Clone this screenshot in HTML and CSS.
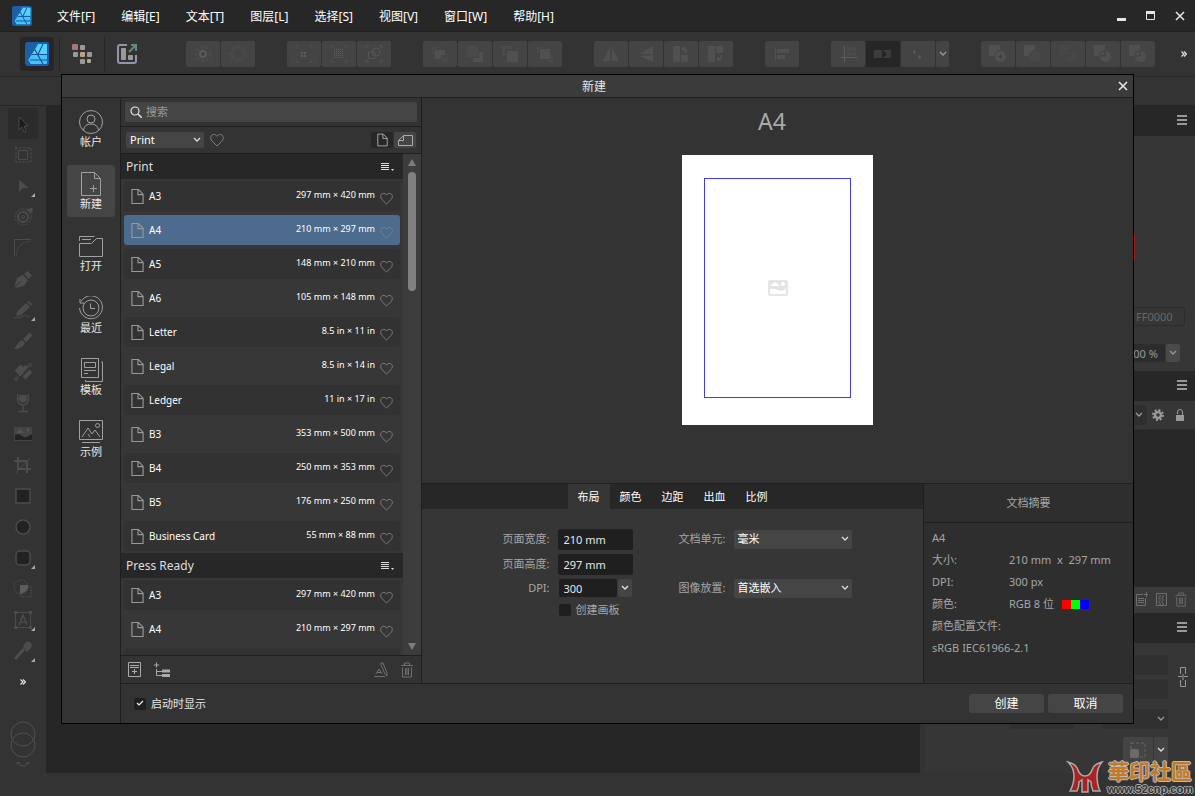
FILE: index.html
```html
<!DOCTYPE html>
<html lang="zh-CN">

<head>
    <meta charset="UTF-8">
    <meta name="viewport" content="width=device-width, initial-scale=1.0">
    <title>新建</title>
    <link rel="stylesheet" href="styles.css">
</head>

<body>
    <!-- shared icons -->
    <svg class="sprite" aria-hidden="true">
        <symbol id="logo" viewBox="0 0 24 24">
            <rect width="24" height="24" rx="3" fill="#1c5fa8" />
            <path d="M12 2h9q1 0 1 1v18q0 1-1 1H5l-3-4z" fill="#45c4fa" />
            <path d="M12 2h9q1 0 1 1v9H7z" fill="#56d0ff" />
            <path d="M12.500 2 2.500 18 5 22M9.500 7l8.500 15M7 12.500h15M5 18h17M13 12.500 18 2" fill="none" stroke="#17549a" stroke-width="1.200" />
        </symbol>
        <symbol id="doc" viewBox="0 0 14 17">
            <path d="M1 1h7l5 5v10H1zM7.500 1v5.500H13" fill="none" stroke="currentColor" stroke-width="1.200" />
        </symbol>
        <symbol id="heart" viewBox="0 0 14 14">
            <path d="M7 13 2.300 8.300C.5 6.500.3 4 1.400 2.600 3 .8 5.800 1 7 3.400 8.200 1 11 .8 12.600 2.600c1.100 1.400.9 3.900-.9 5.700z" fill="none" stroke="currentColor" />
        </symbol>
        <symbol id="burger" viewBox="0 0 10 10">
            <path d="M0 1h10M0 5h10M0 9h10" stroke="currentColor" stroke-width="2" />
        </symbol>
        <symbol id="listmenu" viewBox="0 0 13 10">
            <path d="M0 1.500h8M0 3.500h8M0 5.500h8M0 7.500h8" stroke="currentColor" stroke-width="1.200" />
            <path d="M10 7h3l-1.500 2z" fill="currentColor" />
        </symbol>
        <symbol id="close" viewBox="0 0 10 10">
            <path d="M1 1l8 8M9 1 1 9" stroke="currentColor" stroke-width="1.600" />
        </symbol>
        <symbol id="chev" viewBox="0 0 8 6">
            <path d="M1 1l3 3 3-3" fill="none" stroke="currentColor" stroke-width="1.300" />
        </symbol>
        <symbol id="more" viewBox="0 0 6 6">
            <path d="M.5.5 3 3 .5 5.500M3 .5 5.500 3 3 5.500" fill="none" stroke="currentColor" stroke-width="1.200" />
        </symbol>
        <symbol id="trash" viewBox="0 0 12 16">
            <path d="M0 3.500h12M3.500 3V1h5v2M1.500 5.500v9.500h9V5.500M4.500 6v7M6 6v7M7.500 6v7" fill="none" stroke="currentColor" />
        </symbol>
        <symbol id="bool" viewBox="0 0 20 20">
            <path d="M1 1h11v5a6 6 0 0 0-6 6H1z" fill="currentColor" />
            <circle cx="12.500" cy="12.500" r="5.500" fill="currentColor" />
        </symbol>
    </svg>

    <div class="app">
        <header class="menubar">
            <svg class="app-logo"><use href="#logo" /></svg>
            <nav class="menus">
                <button>文件[F]</button>
                <button>编辑[E]</button>
                <button>文本[T]</button>
                <button>图层[L]</button>
                <button>选择[S]</button>
                <button>视图[V]</button>
                <button>窗口[W]</button>
                <button>帮助[H]</button>
            </nav>
            <div class="window-buttons">
                <button aria-label="最小化"><svg width="10" height="10"><path d="M0 8.500h9" stroke="currentColor" stroke-width="3" /></svg></button>
                <button aria-label="最大化"><svg width="10" height="10"><path d="M.5 1v7.500h8V1" fill="none" stroke="currentColor" /><path d="M0 1.500h9" stroke="currentColor" stroke-width="3" /></svg></button>
                <button aria-label="关闭"><svg width="10" height="10"><use href="#close" /></svg></button>
            </div>
        </header>

        <div class="toolbar">
            <div class="personas">
                <button class="persona active" aria-label="Designer"><svg width="24" height="24"><use href="#logo" /></svg></button>
                <button class="persona" aria-label="Pixel">
                    <svg width="20" height="20">
                        <rect width="6" height="6" rx="1" fill="#a87579" />
                        <rect x="8" y="1" width="5" height="5" rx="1" fill="#999" />
                        <rect x="1" y="8" width="5" height="5" rx="1" fill="#999" />
                        <rect x="8" y="8" width="5" height="5" rx="1" fill="#bba085" />
                        <rect x="15" y="8" width="5" height="5" rx="1" fill="#999" />
                        <rect x="8" y="15" width="5" height="5" rx="1" fill="#999" />
                        <rect x="15" y="15" width="4" height="4" rx="1" fill="#b3a880" />
                    </svg>
                </button>
                <button class="persona" aria-label="Export">
                    <svg width="20" height="20">
                        <path d="M10 1H3Q1 1 1 3v14q0 2 2 2h14q2 0 2-2v-6" fill="none" stroke="#9494ac" stroke-width="2" />
                        <rect x="4" y="4" width="5" height="12" rx="1" fill="#999" />
                        <rect x="11" y="11" width="5" height="5" rx="1" fill="#999" />
                        <path d="M12 8l7-7M14 1h5v6" fill="none" stroke="#5e8d7c" stroke-width="2" />
                    </svg>
                </button>
            </div>
            <div class="tool-groups">
                <div class="group">
                    <button aria-label="设置"><svg width="20" height="20"><circle cx="10" cy="10" r="7" fill="none" stroke="currentColor" stroke-width="3" stroke-dasharray="3 2" opacity=".6" /><circle cx="10" cy="10" r="3" fill="none" stroke="#5c5c5c" stroke-width="2" /></svg></button>
                    <button aria-label="默认"><svg width="20" height="20"><circle cx="10" cy="10" r="6" fill="none" stroke="#4a4a4a" stroke-width="2" /><circle cx="10" cy="10" r="8" fill="none" stroke="#4a4a4a" stroke-width="2" stroke-dasharray="3 3" /></svg></button>
                </div>
                <div class="group">
                    <button aria-label="像素网格"><svg width="20" height="20"><path d="M2 5V2h3M15 2h3v3M18 15v3h-3M5 18H2v-3" fill="none" stroke="currentColor" /><path d="M7 9h6M7 12h6" stroke="#5c5c5c" stroke-width="2" stroke-dasharray="2 1" /></svg></button>
                    <button aria-label="网格"><svg width="20" height="20"><path d="M2 5V2h3M15 2h3v3M18 15v3h-3M5 18H2v-3" fill="none" stroke="currentColor" /><path d="M5 5.500h10M5 7.500h10M5 9.500h10M5 11.500h10M5 13.500h10" stroke="#606060" stroke-dasharray="1 1" /></svg></button>
                    <button aria-label="形状对齐"><svg width="20" height="20" fill="none" stroke="#555"><path d="M2 5V2h3M15 2h3v3M18 15v3h-3M5 18H2v-3M4.500 8h6.500v6.500H4.500z" /><circle cx="12" cy="8" r="4" /></svg></button>
                </div>
                <div class="group">
                    <button aria-label="置于底层"><svg width="20" height="20" fill="currentColor"><path d="M2 3h6v2H5v5H2z" opacity=".4" /><path d="M5 6h10v5h-4v4H5z" /><path d="M12 13h6v5h-6z" opacity=".4" /></svg></button>
                    <button aria-label="后移"><svg width="20" height="20"><path d="M2 2h11v11H2z" fill="#4a4a4a" /><path d="M14 8h4v10H8v-4h6z" fill="currentColor" /></svg></button>
                    <button aria-label="前移"><svg width="20" height="20"><path d="M2 2h10v3H5v7H2z" fill="#4a4a4a" /><path d="M7 7h11v11H7z" fill="currentColor" /></svg></button>
                    <button aria-label="置于顶层"><svg width="20" height="20"><path d="M2 3h6v1H4v5H2zM16 12h2v6h-6v-2h4z" fill="#4a4a4a" /><path d="M5 5h10v10H5z" fill="currentColor" /></svg></button>
                </div>
                <div class="group">
                    <button aria-label="水平翻转"><svg width="20" height="20" fill="currentColor"><path d="M9 3v14H2zM11 3v14h7z" /></svg></button>
                    <button aria-label="垂直翻转"><svg width="20" height="20" fill="currentColor"><path d="M17 2v8H3zM17 11v7L3 12z" /></svg></button>
                    <button aria-label="左旋"><svg width="20" height="20"><path d="M2 2h7v16H2zM10 11h7v7h-7z" fill="currentColor" /><path d="M15 9V5h-4M13 3l-2 2 2 2" fill="none" stroke="#5a5a5a" /></svg></button>
                    <button aria-label="右旋"><svg width="20" height="20"><path d="M2 2h7v16H2zM10 2h7v7h-7z" fill="currentColor" /><path d="M15 11v4h-4M13 13l-2 2 2 2" fill="none" stroke="#5a5a5a" /></svg></button>
                </div>
                <div class="group">
                    <button aria-label="对齐"><svg width="20" height="20"><path d="M3.500 3v14" stroke="currentColor" /><path d="M5 7h12M5 13h8" stroke="currentColor" stroke-width="4" /></svg></button>
                </div>
                <div class="group">
                    <button aria-label="吸附网格"><svg width="20" height="20"><path d="M6.500 2v16M3 13.500h16" stroke="#5c5c5c" /><path d="M9 3h4v4H9zM14 3h4v4h-4zM9 8h4v4H9zM14 8h4v4h-4z" fill="#4a4a4a" /></svg></button>
                    <button class="pressed" aria-label="吸附"><svg width="20" height="20" fill="#3b3b3b"><path d="M1 6h8v8H1zM10 6h8v8h-8l4-4z" /></svg></button>
                    <button aria-label="吸附候选"><svg width="20" height="20" fill="#585858"><path d="M5 7l2-1 1 2-1 2-2-1zM10 12l2-1 1 2-1 2-2-1z" /></svg></button>
                    <button class="narrow" aria-label="吸附选项"><svg width="8" height="6"><use href="#chev" /></svg></button>
                </div>
                <div class="group">
                    <button aria-label="相加"><svg width="20" height="20"><use href="#bool" /><path d="M12.500 10v5M10 12.500h5" stroke="#3d3d3d" /></svg></button>
                    <button aria-label="相减"><svg width="20" height="20"><use href="#bool" /><circle cx="12.500" cy="12.500" r="5.500" fill="#484848" /></svg></button>
                    <button aria-label="相交"><svg class="faint" width="20" height="20"><use href="#bool" /><path d="M7 12h5V7" fill="none" stroke="#333" /></svg></button>
                    <button aria-label="分割"><svg width="20" height="20"><use href="#bool" /><path d="M7 12h5V7" fill="none" stroke="#3d3d3d" /></svg></button>
                    <button aria-label="合并"><svg width="20" height="20"><use href="#bool" /><path d="M7 12h5V7" fill="none" stroke="#3d3d3d" /></svg></button>
                </div>
            </div>
            <button class="more" aria-label="更多"><svg width="6" height="6"><use href="#more" /></svg></button>
        </div>
        <div class="contextbar"></div>

        <div class="workspace">
            <aside class="tools">
                <button class="active" aria-label="移动"><svg width="20" height="20"><path d="M6 3v13l3-3 2 5 2-1-2-5h4z" fill="#1c1c1c" stroke="#555" stroke-width=".7" /></svg></button>
                <button aria-label="画板"><svg width="20" height="20" fill="none" stroke="currentColor"><path d="M5.500 5.500h9v9h-9z" /><path d="M2 3h16v14H3V1" stroke-dasharray="3 1" /></svg></button>
                <button class="sub" aria-label="节点"><svg width="20" height="20"><path d="M6 4v12l4-4h6z" fill="currentColor" /></svg></button>
                <button aria-label="点变换"><svg width="20" height="20" fill="none" stroke="currentColor"><circle cx="10" cy="10" r="8" stroke-dasharray="3 1" /><circle cx="10" cy="10" r="5" stroke-width="2" /><circle cx="10" cy="10" r="1.500" /><path d="M14 3l5-2v5z" fill="currentColor" /></svg></button>
                <button aria-label="边角"><svg width="20" height="20" fill="none" stroke="currentColor"><path d="M1.500 18V1.500H18" /><path d="M3 18Q4 4 18 3" opacity=".7" /></svg></button>
                <button aria-label="钢笔"><svg width="20" height="20"><path d="M1 19 4 9l6-3 5 5-4 6zM11 5l3-3 5 4-3 4z" fill="currentColor" /><path d="M1 19l7-7" stroke="#333" /></svg></button>
                <button class="sub" aria-label="铅笔"><svg width="20" height="20"><path d="M4 12 13 3l4 4-9 8-5 1zM14 2l2-1 3 3-1 2z" fill="currentColor" /><path d="M1 18q7 0 9-2t3 0 4 0" fill="none" stroke="currentColor" /></svg></button>
                <button aria-label="矢量画笔"><svg width="20" height="20"><path d="M10 8l6-6q3 0 3 3l-6 6zM9 9l3 3q-3 6-11 6l5-7z" fill="currentColor" /></svg></button>
                <button aria-label="填充"><svg width="20" height="20" stroke="currentColor"><path d="M3 10l6-6M6 13l8-9M11 16l7-7" stroke-width="4" /><path d="M3 17 17 3" /><circle cx="3" cy="17" r="1.500" fill="#333" /><circle cx="17" cy="3" r="1.500" fill="#333" /></svg></button>
                <button aria-label="透明度"><svg width="20" height="20" fill="none" stroke="currentColor" stroke-width="1.500"><path d="M5 1Q3 11 10 12q7-1 5-11M10 12v6M5 18.500h10" /><path d="M7 2v5q3 4 6 0V2" fill="currentColor" /></svg></button>
                <button aria-label="置入图像"><svg width="20" height="20"><path d="M1 3h18v14H1z" fill="#444" /><path d="M2 11q4-2 7 1t10-2v6H2z" fill="#222" /><path d="M3 9l4-4 4 4z" fill="#555" /><circle cx="15" cy="6" r="1.500" fill="#555" /></svg></button>
                <button aria-label="裁剪"><svg width="20" height="20" fill="none" stroke="currentColor" stroke-width="2"><path d="M5 2v12h13M1 6h13v12" /><path d="M3 18 17 3" stroke-width="1" /></svg></button>
                <button aria-label="矩形"><svg width="20" height="20"><rect x="3" y="3" width="14" height="14" fill="#222" stroke="currentColor" stroke-width="1.500" /></svg></button>
                <button aria-label="椭圆"><svg width="20" height="20"><circle cx="10" cy="10" r="7" fill="#222" stroke="currentColor" stroke-width="1.500" /></svg></button>
                <button class="sub" aria-label="圆角矩形"><svg width="20" height="20"><rect x="3" y="3" width="14" height="14" rx="4" fill="#222" stroke="currentColor" stroke-width="1.500" /></svg></button>
                <button aria-label="形状构建"><svg width="20" height="20"><circle cx="8" cy="8" r="7" fill="none" stroke="currentColor" stroke-dasharray="2 1" /><path d="M8 8h10v10H8z" fill="none" stroke="currentColor" stroke-dasharray="2 1" /><path d="M7 6h8q0 8-8 9z" fill="#5c5c5c" /></svg></button>
                <button class="sub" aria-label="文本"><svg width="20" height="20" fill="none" stroke="currentColor"><path d="M2.500 2.500h15v15h-15z" /><path d="M1 2.500h3M16 2.500h3M1 17.500h3M16 17.500h3" stroke-width="3" /><path d="M6 15l4-10 4 10M7.500 12h5" stroke-width="1.500" /></svg></button>
                <button class="sub" aria-label="取色"><svg width="20" height="20"><path d="M2 18 11 8" stroke="currentColor" stroke-width="3" /><path d="M10 6l4 5 4-4q2-4-1-6t-5 1z" fill="currentColor" /></svg></button>
                <button class="tools-more" aria-label="更多工具"><svg width="6" height="6"><use href="#more" /></svg></button>
                <svg class="swatches" width="28" height="50" fill="none" stroke="#515151"><circle cx="14" cy="15" r="12" /><circle cx="14" cy="26" r="12" /><path d="M9 43q1 4 5 4t5-4M7 45l2-2 2 2M17 45l2-2 2 2" /></svg>
            </aside>

            <main class="canvas"></main>

            <aside class="panels">
                <div class="panel-head"><svg><use href="#burger" /></svg></div>
                <section class="colour-panel">
                    <span class="wheel"></span>
                    <input class="hex" type="text" value="FF0000" aria-label="十六进制">
                    <div class="opacity">
                        <input type="text" value="100 %" aria-label="不透明度">
                        <button aria-label="不透明度滑块"><svg width="8" height="6"><use href="#chev" /></svg></button>
                    </div>
                </section>
                <div class="panel-head"><svg><use href="#burger" /></svg></div>
                <div class="layer-bar">
                    <button class="blend" aria-label="混合模式"><svg width="8" height="6"><use href="#chev" /></svg></button>
                    <svg width="12" height="12"><circle cx="6" cy="6" r="3" fill="none" stroke="currentColor" stroke-width="2.500" /><circle cx="6" cy="6" r="5" fill="none" stroke="currentColor" stroke-width="2" stroke-dasharray="2 1.900" /></svg>
                    <svg width="10" height="12"><path d="M1 6h8v6H1z" fill="currentColor" /><path d="M2.500 5V3q0-2.500 2.500-2.500T7.500 3v3" fill="none" stroke="currentColor" /></svg>
                </div>
                <div class="layer-list"></div>
                <div class="layer-actions">
                    <svg width="12" height="15" fill="none" stroke="currentColor"><path d="M7 2.500H.5v11h9V6M2 6.500h6M2 8.500h6M2 10.500h6M10.500 0v5M8 2.500h4" /></svg>
                    <svg width="11" height="15" fill="none" stroke="currentColor"><path d="M.5 1.500h10v12H.5z" /><path d="M3 4h6M2 6h6M3 8h6M2 10h6M3 12h6" stroke-dasharray="2 1" /></svg>
                    <svg width="12" height="15"><use href="#trash" /></svg>
                </div>
                <div class="panel-head"><svg><use href="#burger" /></svg></div>
                <section class="transform-panel">
                    <div class="transform-fields">
                        <input type="text" aria-label="X"><input type="text" aria-label="宽">
                        <input type="text" aria-label="Y"><input type="text" aria-label="高">
                        <input type="text" aria-label="旋转">
                        <button class="shear" aria-label="切变"><svg width="8" height="6"><use href="#chev" /></svg></button>
                    </div>
                    <svg class="link" width="10" height="22" fill="none" stroke="currentColor"><path d="M2.500 8V1.500h5V8M2.500 14v6.500h5V14M0 10.500h4M6 10.500h4M5 8v6" /></svg>
                    <div class="scale">
                        <button aria-label="缩放"><svg width="16" height="16"><path d="M1 1h14v14H1z" fill="none" stroke="#666" stroke-dasharray="3 2" /><rect y="7" width="9" height="9" rx="2" fill="#6a6a6a" /></svg></button>
                        <button class="narrow" aria-label="缩放选项"><svg width="8" height="6"><use href="#chev" /></svg></button>
                    </div>
                </section>
            </aside>
        </div>
        <footer class="statusbar"></footer>
    </div>

    <div class="dialog" role="dialog" aria-labelledby="dialogTitle">
        <div class="dialog-title">
            <span id="dialogTitle">新建</span>
            <button aria-label="关闭"><svg width="10" height="10"><use href="#close" /></svg></button>
        </div>
        <div class="dialog-body">
            <nav class="side-nav">
                <button>
                    <svg width="24" height="24"><circle cx="12" cy="12" r="11.500" /><circle cx="12" cy="9" r="4" /><path d="M4.500 20q1-6 7.500-6t7.500 6" /></svg>
                    帐户
                </button>
                <button class="active">
                    <svg width="24" height="24"><path d="M2.500.5h13l6 6v17h-19zM15.500.5v6h6M14.500 13v7M11 16.500h7" /></svg>
                    新建
                </button>
                <button>
                    <svg width="24" height="24"><path d="M.5 22.500V9.500h12l5-5h6v18zM.5 7V2.500h15M3 5.500h9" /></svg>
                    打开
                </button>
                <button>
                    <svg width="24" height="24"><path d="M2 5.500A11.500 11.500 0 1 1 .5 12M1 3v4h4" /><circle cx="12" cy="12" r="8" /><path d="M11.500 7.500v5H16" /></svg>
                    最近
                </button>
                <button>
                    <svg width="24" height="24"><path d="M2.500.5h17v19h-17zM22 4h1.500v19.500h-17V22M5.500 4.500h11v5h-11zM5 12.500h12M5 15.500h4" /></svg>
                    模板
                </button>
                <button>
                    <svg width="24" height="24"><path d="M.5.5h23v19H.5zM3 17l6-9 4 6 3-4 5 7M9 14l2 3M3 22.500h18" /><circle cx="18.500" cy="5.500" r="2" /></svg>
                    示例
                </button>
            </nav>

            <div class="dialog-main">
                <div class="columns">
                    <section class="presets">
                        <div class="search">
                            <svg width="12" height="12"><circle cx="5" cy="5" r="4" fill="none" stroke="currentColor" stroke-width="1.200" /><path d="M8 8l4 4" stroke="currentColor" stroke-width="1.500" /></svg>
                            <input type="text" placeholder="搜索" aria-label="搜索">
                        </div>
                        <div class="filter">
                            <select aria-label="类别"><option>Print</option></select>
                            <button class="fav" aria-label="收藏"><svg width="14" height="14"><use href="#heart" /></svg></button>
                            <div class="orientation">
                                <button class="active" aria-label="纵向"><svg width="11" height="14"><use href="#doc" /></svg></button>
                                <button aria-label="横向"><svg width="15" height="11" fill="none" stroke="currentColor"><path d="M5.500.5h9v10H.5V5.500zM5.500.5v5H.5" /></svg></button>
                            </div>
                        </div>
                        <div class="list-wrap">
                            <div class="list">
                                <h2>Print <svg width="13" height="10"><use href="#listmenu" /></svg></h2>
                                <ul>
                                    <li><svg class="page"><use href="#doc" /></svg><b>A3</b><span>297 mm × 420 mm</span><button aria-label="收藏"><svg width="13" height="13"><use href="#heart" /></svg></button></li>
                                    <li class="selected"><svg class="page"><use href="#doc" /></svg><b>A4</b><span>210 mm × 297 mm</span><button aria-label="收藏"><svg width="13" height="13"><use href="#heart" /></svg></button></li>
                                    <li><svg class="page"><use href="#doc" /></svg><b>A5</b><span>148 mm × 210 mm</span><button aria-label="收藏"><svg width="13" height="13"><use href="#heart" /></svg></button></li>
                                    <li><svg class="page"><use href="#doc" /></svg><b>A6</b><span>105 mm × 148 mm</span><button aria-label="收藏"><svg width="13" height="13"><use href="#heart" /></svg></button></li>
                                    <li><svg class="page"><use href="#doc" /></svg><b>Letter</b><span>8.5 in × 11 in</span><button aria-label="收藏"><svg width="13" height="13"><use href="#heart" /></svg></button></li>
                                    <li><svg class="page"><use href="#doc" /></svg><b>Legal</b><span>8.5 in × 14 in</span><button aria-label="收藏"><svg width="13" height="13"><use href="#heart" /></svg></button></li>
                                    <li><svg class="page"><use href="#doc" /></svg><b>Ledger</b><span>11 in × 17 in</span><button aria-label="收藏"><svg width="13" height="13"><use href="#heart" /></svg></button></li>
                                    <li><svg class="page"><use href="#doc" /></svg><b>B3</b><span>353 mm × 500 mm</span><button aria-label="收藏"><svg width="13" height="13"><use href="#heart" /></svg></button></li>
                                    <li><svg class="page"><use href="#doc" /></svg><b>B4</b><span>250 mm × 353 mm</span><button aria-label="收藏"><svg width="13" height="13"><use href="#heart" /></svg></button></li>
                                    <li><svg class="page"><use href="#doc" /></svg><b>B5</b><span>176 mm × 250 mm</span><button aria-label="收藏"><svg width="13" height="13"><use href="#heart" /></svg></button></li>
                                    <li><svg class="page"><use href="#doc" /></svg><b>Business Card</b><span>55 mm × 88 mm</span><button aria-label="收藏"><svg width="13" height="13"><use href="#heart" /></svg></button></li>
                                </ul>
                                <h2>Press Ready <svg width="13" height="10"><use href="#listmenu" /></svg></h2>
                                <ul>
                                    <li><svg class="page"><use href="#doc" /></svg><b>A3</b><span>297 mm × 420 mm</span><button aria-label="收藏"><svg width="13" height="13"><use href="#heart" /></svg></button></li>
                                    <li><svg class="page"><use href="#doc" /></svg><b>A4</b><span>210 mm × 297 mm</span><button aria-label="收藏"><svg width="13" height="13"><use href="#heart" /></svg></button></li>
                                    <li></li>
                                </ul>
                            </div>
                            <div class="scrollbar">
                                <svg width="8" height="7"><path d="M4 0l4 7H0z" fill="#7d7d7d" /></svg>
                                <span class="thumb"></span>
                                <svg width="8" height="7"><path d="M0 0h8L4 7z" fill="#7d7d7d" /></svg>
                            </div>
                        </div>
                        <div class="list-actions">
                            <button aria-label="添加预设"><svg width="13" height="16" fill="none" stroke="currentColor"><path d="M.5.5h12v14H.5zM2 3.500h9M2 5.500h9M6.500 7v5M4 9.500h5" /></svg></button>
                            <button aria-label="添加类别"><svg width="16" height="16" fill="none" stroke="currentColor"><path d="M0 3h5M2.500.5v5M2.500 7v6.500H8M2.500 9.500H8" /><path d="M8 9h8M8 13.500h8" stroke-width="3" /></svg></button>
                            <span class="spacer"></span>
                            <button class="off" aria-label="重命名"><svg width="14" height="16" fill="none" stroke="currentColor"><path d="M0 14.500h11M2 12l3-5 3 5M3 10.500h4M7 1l2 0 4 10v3l-2-2L7 3z" /></svg></button>
                            <button class="off" aria-label="删除"><svg width="12" height="16"><use href="#trash" /></svg></button>
                        </div>
                    </section>

                    <section class="details">
                        <div class="preview">
                            <h1>A4</h1>
                            <div class="sheet">
                                <div class="margins">
                                    <svg width="20" height="16"><rect x="1" y="1" width="18" height="14" rx="1" fill="#fff" stroke="#e6e6e6" stroke-width="2" /><path d="M1 1h18v7q-5 4-9 2t-9-1z" fill="#e3e3e3" /><path d="M2 6l5-4 5 4z" fill="#fff" /><circle cx="15" cy="4" r="2" fill="#fff" /></svg>
                                </div>
                            </div>
                        </div>
                        <div class="settings">
                            <div class="options">
                                <div class="tabs" role="tablist">
                                    <button class="active" role="tab">布局</button>
                                    <button role="tab">颜色</button>
                                    <button role="tab">边距</button>
                                    <button role="tab">出血</button>
                                    <button role="tab">比例</button>
                                </div>
                                <form class="layout-form">
                                    <label for="pageWidth">页面宽度:</label>
                                    <input type="text" id="pageWidth" value="210 mm">
                                    <label for="unit">文档单元:</label>
                                    <select id="unit"><option>毫米</option></select>

                                    <label for="pageHeight">页面高度:</label>
                                    <input type="text" id="pageHeight" value="297 mm">

                                    <label for="dpi" class="row-start">DPI:</label>
                                    <div class="combo">
                                        <input type="text" id="dpi" value="300">
                                        <button type="button" aria-label="DPI 列表"><svg width="8" height="6"><use href="#chev" /></svg></button>
                                    </div>
                                    <label for="placement">图像放置:</label>
                                    <select id="placement"><option>首选嵌入</option></select>

                                    <label class="check artboard"><input type="checkbox">创建画板</label>
                                </form>
                            </div>
                            <div class="summary">
                                <h3>文档摘要</h3>
                                <dl>
                                    <dt class="wide">A4</dt>
                                    <dt>大小:</dt>
                                    <dd>210 mm &nbsp;x&nbsp; 297 mm</dd>
                                    <dt>DPI:</dt>
                                    <dd>300 px</dd>
                                    <dt>颜色:</dt>
                                    <dd>RGB 8 位 <span class="rgb"><i class="r"></i><i class="g"></i><i class="b"></i></span></dd>
                                    <dt class="wide">颜色配置文件:</dt>
                                    <dd class="wide">sRGB IEC61966-2.1</dd>
                                </dl>
                            </div>
                        </div>
                    </section>
                </div>

                <div class="dialog-footer">
                    <label class="check"><input type="checkbox" checked>启动时显示</label>
                    <div class="buttons">
                        <button>创建</button>
                        <button>取消</button>
                    </div>
                </div>
            </div>
        </div>
    </div>

    <div class="watermark">
        <svg width="38" height="34" viewBox="0 0 38 34">
            <path d="M2 2q8 2 10 8t7 6q5 0 7-6t10-8q-5 6-5 14 0 9 3 15h-7q-2-5-2-9l-3-2v12h-6V20l-3 2q0 5-2 9H4q4-7 4-15T2 2z" fill="#a82322" stroke="#aaa" stroke-width="1.500" />
        </svg>
        <div class="watermark-text">
            <strong>華印社區</strong>
            <small>www.52cnp.com</small>
        </div>
    </div>
</body>

</html>
```

FILE: styles.css
```css
:root {
    --bg: #333333;
    --panel: #363636;
    --dark: #272727;
    --field: #1f1f1f;
    --button: #454545;
    --line: #1f1f1f;
    --accent: #4d6b8c;
    --text: #e6e6e6;
    --muted: #a6a6a6;
}

* {
    box-sizing: border-box;
}

body {
    margin: 0;
    background: var(--bg);
    color: var(--text);
    font-family: "Noto Sans", "Noto Sans CJK SC", sans-serif;
    font-size: 11px;
    line-height: 16px;
}

button,
input,
select {
    margin: 0;
    padding: 0;
    border: none;
    border-radius: 2px;
    background: none;
    color: inherit;
    font: inherit;
}

button {
    display: flex;
    align-items: center;
    justify-content: center;
}

select {
    appearance: none;
    padding: 0 16px 0 4px;
    background: var(--button) url("data:image/svg+xml,%3Csvg xmlns='http://www.w3.org/2000/svg' width='8' height='6'%3E%3Cpath d='M1 1l3 3 3-3' fill='none' stroke='%23ddd' stroke-width='1.3'/%3E%3C/svg%3E") no-repeat right 3px center;
    color: #fff;
}

svg {
    display: block;
    flex: none;
}

.sprite {
    display: none;
}

/* application window */

.app {
    display: flex;
    flex-direction: column;
    height: 100vh;
    overflow: hidden;
}

.menubar {
    display: flex;
    align-items: center;
    height: 32px;
    padding: 0 10px 0 12px;
    background: var(--dark);
    border-bottom: 1px solid var(--line);
}

.app-logo {
    width: 20px;
    height: 20px;
}

.menus {
    display: flex;
    gap: 26px;
    margin-left: 25px;
    padding-top: 2px;
    font-size: 12px;
    color: #fff;
}

.window-buttons {
    display: flex;
    gap: 19px;
    margin-left: auto;
}

.toolbar {
    display: flex;
    align-items: center;
    height: 45px;
    padding: 0 8px 0 20px;
    border-bottom: 1px solid var(--dark);
}

.personas {
    display: flex;
    flex: none;
    width: 166px;
}

.persona {
    width: 45px;
    height: 34px;
}

.persona + .persona {
    border-left: 1px solid #262626;
    border-radius: 0;
}

.persona.active {
    width: 34px;
    margin-right: 5px;
    background: #262626;
    border-radius: 3px;
}

.tool-groups {
    display: flex;
    gap: 32px;
    color: #505050;
}

.group {
    display: flex;
    gap: 1px;
}

.group button {
    width: 34px;
    height: 26px;
    background: #444;
}

.group .pressed {
    background: #262626;
}

.group .narrow {
    width: 13px;
    color: #999;
}

.faint {
    opacity: 0.3;
}

.more {
    margin-left: auto;
}

.contextbar {
    height: 29px;
    border-bottom: 1px solid var(--dark);
}

.workspace {
    display: flex;
    flex: 1;
    min-height: 0;
}

.tools {
    display: flex;
    flex-direction: column;
    align-items: center;
    width: 46px;
    padding-top: 2px;
    color: #4c4c4c;
}

.tools button {
    position: relative;
    flex: none;
    width: 30px;
    height: 31px;
}

.tools .active {
    background: #2b2b2b;
    border-radius: 3px;
}

.tools .sub::after {
    content: "";
    position: absolute;
    right: 3px;
    bottom: 4px;
    border: 2px solid transparent;
    border-right-color: #aaa;
    border-bottom-color: #aaa;
}

.tools .tools-more {
    color: var(--text);
}

.swatches {
    margin-top: 22px;
}

.canvas {
    flex: 1;
    background: #262626;
}

.panels {
    display: flex;
    flex-direction: column;
    width: 275px;
    border-left: 5px solid var(--bg);
    background: var(--panel);
    color: #999;
}

.panel-head {
    display: flex;
    align-items: center;
    justify-content: flex-end;
    height: 30px;
    padding: 0 8px 2px 0;
    background: var(--dark);
}

.panel-head svg {
    width: 10px;
    height: 10px;
}

.colour-panel {
    display: flex;
    flex-direction: column;
    align-items: flex-end;
    height: 235px;
    padding: 98px 10px 0 0;
}

.wheel {
    align-self: stretch;
    width: 210px;
    height: 26px;
    border-right: 2px solid #a81616;
}

.hex {
    width: 52px;
    height: 19px;
    margin: 47px 0 18px;
    padding-left: 2px;
    border: 1px solid #2c2c2c;
    color: #666;
}

.opacity {
    display: flex;
    gap: 1px;
    margin-right: 5px;
}

.opacity input {
    width: 48px;
    height: 18px;
    padding-left: 10px;
    background: #2c2c2c;
}

.opacity button {
    width: 14px;
    background: #4a4a4a;
}

.layer-bar {
    display: flex;
    align-items: center;
    justify-content: flex-end;
    gap: 11px;
    height: 29px;
    padding-right: 10px;
    border-bottom: 1px solid #2c2c2c;
}

.blend {
    justify-content: flex-end;
    width: 120px;
    height: 20px;
    margin-right: -6px;
    padding-right: 4px;
    background: #2f2f2f;
}

.layer-list {
    flex: 1;
    background: #282828;
}

.layer-actions {
    display: flex;
    align-items: center;
    justify-content: flex-end;
    gap: 8px;
    height: 26px;
    padding: 0 8px 2px 0;
    background: #3a3a3a;
    color: #6e6e6e;
}

.transform-panel {
    display: grid;
    grid-template-columns: 1fr 10px;
    column-gap: 10px;
    align-content: start;
    height: 130px;
    padding: 12px 7px 0 84px;
}

.transform-fields {
    display: grid;
    grid-template-columns: 65px 65px;
    grid-auto-rows: 20px;
    justify-content: space-between;
    gap: 4px;
}

.transform-fields input,
.shear {
    min-width: 0;
    background: #303030;
}

.transform-fields input:nth-child(n+5),
.shear {
    margin-top: 6px;
    height: 20px;
}

.shear {
    justify-content: flex-end;
    padding-right: 3px;
}

.link {
    margin-top: 11px;
}

.scale {
    display: flex;
    justify-content: flex-end;
    gap: 1px;
    margin-top: 14px;
}

.scale button {
    width: 30px;
    height: 26px;
    background: #444;
}

.scale .narrow {
    width: 14px;
    color: #ddd;
}

.statusbar {
    height: 23px;
}

/* new document dialog */

.dialog {
    position: absolute;
    top: 74px;
    right: 61px;
    bottom: 72px;
    left: 61px;
    display: flex;
    flex-direction: column;
    border: 1px solid #000;
    background: var(--bg);
}

.dialog-title {
    display: flex;
    align-items: center;
    height: 23px;
    padding: 0 5px 0 8px;
    border-bottom: 1px solid var(--line);
    background: #3b3b3b;
    font-size: 12px;
}

.dialog-title span {
    flex: 1;
    padding-top: 1px;
    text-align: center;
}

.dialog-body {
    display: flex;
    flex: 1;
    min-height: 0;
}

.side-nav {
    display: flex;
    flex-direction: column;
    align-items: center;
    gap: 10px;
    width: 59px;
    padding-top: 5px;
    border-right: 1px solid var(--line);
}

.side-nav button {
    flex-direction: column;
    width: 48px;
    height: 52px;
    padding-top: 1px;
    border-radius: 3px;
}

.side-nav button.active {
    background: var(--button);
}

.side-nav svg {
    fill: none;
    stroke: #a0a0a0;
}

.dialog-main {
    display: flex;
    flex: 1;
    flex-direction: column;
    min-width: 0;
}

.columns {
    display: flex;
    flex: 1;
    min-height: 0;
}

.presets {
    display: flex;
    flex-direction: column;
    width: 301px;
    border-right: 1px solid var(--line);
}

.search {
    display: flex;
    align-items: center;
    gap: 4px;
    height: 20px;
    margin: 4px;
    padding: 0 5px;
    border-radius: 2px;
    background: var(--button);
}

.search input {
    flex: 1;
}

.search input::placeholder {
    color: #999;
}

.filter {
    display: flex;
    align-items: center;
    height: 28px;
    padding: 0 5px;
    border: 1px solid var(--line);
    border-width: 1px 0;
}

.filter select {
    width: 78px;
    height: 16px;
}

.fav {
    margin-left: 6px;
    color: #808080;
}

.orientation {
    display: flex;
    gap: 1px;
    margin-left: auto;
}

.orientation button {
    width: 22px;
    height: 16px;
    background: var(--button);
    color: #aaa;
}

.orientation .active {
    background: var(--dark);
}

.list-wrap {
    display: flex;
    flex: 1;
    min-height: 0;
}

.list {
    flex: 1;
    overflow: hidden;
    background: #373737;
}

.list h2 {
    display: flex;
    align-items: center;
    justify-content: space-between;
    height: 25px;
    margin: 0;
    padding: 0 9px 0 5px;
    background: var(--dark);
    color: #ddd;
    font-size: 12px;
    font-weight: 400;
}

.list ul {
    display: flex;
    flex-direction: column;
    gap: 4px;
    margin: 0;
    padding: 2px 3px;
    list-style: none;
}

.list li {
    display: flex;
    align-items: center;
    height: 30px;
    padding: 0 7px;
    border-radius: 3px;
    color: #fff;
}

.list li:nth-child(odd) {
    background: #323232;
}

.list li.selected {
    background: var(--accent);
}

.page {
    width: 13px;
    height: 17px;
    color: #999;
}

.list b {
    flex: 1;
    margin-left: 5px;
    padding-bottom: 1px;
    font-size: 10px;
    font-weight: 400;
}

.list li span {
    padding-bottom: 2px;
    font-size: 9px;
    font-weight: 400;
}

.list li button {
    margin: 4px 0 0 5px;
    color: #7f7f7f;
}

.scrollbar {
    display: flex;
    flex-direction: column;
    align-items: center;
    width: 18px;
    padding: 5px 0;
    background: #3d3d3d;
}

.thumb {
    width: 8px;
    height: 119px;
    margin: 6px 0 auto;
    border-radius: 4px;
    background: #808080;
}

.list-actions {
    display: flex;
    align-items: center;
    gap: 13px;
    height: 28px;
    padding: 0 8px 0 7px;
    border-top: 1px solid var(--line);
    color: #aaa;
}

.spacer {
    flex: 1;
}

.off {
    color: #707070;
}

.details {
    display: flex;
    flex: 1;
    flex-direction: column;
    min-width: 0;
}

.preview {
    display: flex;
    flex: 1;
    flex-direction: column;
    align-items: center;
}

.preview h1 {
    margin: 7px 0 18px;
    padding-right: 11px;
    color: #aaa;
    font-size: 23px;
    font-weight: 400;
    line-height: 32px;
}

.sheet {
    width: 191px;
    height: 270px;
    padding: 23px 22px 27px;
    background: #fff;
}

.margins {
    display: flex;
    align-items: center;
    justify-content: center;
    height: 100%;
    border: 1px solid #3c3ce8;
}

.settings {
    display: flex;
    height: 200px;
    border-top: 1px solid var(--line);
}

.options {
    flex: 1;
    background: var(--panel);
}

.tabs {
    display: flex;
    justify-content: center;
    height: 25px;
    background: var(--dark);
}

.tabs button {
    width: 42px;
    border-radius: 0;
    color: #fff;
}

.tabs .active {
    background: var(--panel);
}

.layout-form {
    display: grid;
    grid-template-columns: 48px 75px 85px 118px;
    grid-template-rows: 22px 22px 20px 18px;
    gap: 3px 8px;
    align-items: center;
    justify-content: center;
    padding: 19px 0 0 8px;
}

.layout-form label {
    color: var(--muted);
    text-align: right;
    white-space: nowrap;
}

.layout-form .row-start {
    grid-column: 1;
}

.layout-form input[type="text"] {
    width: 75px;
    height: 21px;
    padding-left: 6px;
    background: var(--field);
}

.layout-form select {
    height: 19px;
}

.layout-form .combo {
    display: flex;
    gap: 1px;
    padding: 0 1px;
}

.layout-form .combo input {
    width: 58px;
    height: 18px;
    padding-left: 5px;
}

.combo button {
    width: 14px;
    background: var(--button);
}

.check {
    display: flex;
    align-items: center;
    gap: 5px;
}

.check input {
    appearance: none;
    width: 12px;
    height: 12px;
    background: var(--field);
}

.check input:checked {
    background: var(--field) url("data:image/svg+xml,%3Csvg xmlns='http://www.w3.org/2000/svg' width='8' height='7'%3E%3Cpath d='M1 3l2 2 4-4' fill='none' stroke='%23eee' stroke-width='1.2'/%3E%3C/svg%3E") no-repeat center;
}

.artboard {
    grid-column: 2;
    padding-left: 1px;
}

.summary {
    width: 210px;
    border-left: 1px solid var(--line);
    background: #2e2e2e;
    color: var(--muted);
}

.summary h3 {
    height: 39px;
    margin: 0;
    border-bottom: 1px solid var(--line);
    font-size: 11px;
    font-weight: 400;
    line-height: 38px;
    text-align: center;
}

.summary dl {
    display: grid;
    grid-template-columns: 77px 1fr;
    margin: 0;
    padding: 4px 8px;
    line-height: 22px;
}

.summary dd {
    display: flex;
    align-items: center;
    gap: 8px;
    margin: 0;
    white-space: nowrap;
}

.summary .wide {
    grid-column: 1 / -1;
}

.rgb {
    display: flex;
}

.rgb i {
    width: 9px;
    height: 9px;
}

.r {
    background: #f00;
}

.g {
    background: #0f0;
}

.b {
    background: #00f;
}

.dialog-footer {
    display: flex;
    align-items: center;
    justify-content: space-between;
    height: 40px;
    padding: 0 10px 0 13px;
    border-top: 1px solid var(--line);
}

.buttons {
    display: flex;
    gap: 4px;
}

.buttons button {
    width: 75px;
    height: 19px;
    background: var(--button);
    color: #fff;
    font-size: 12px;
}

/* site mark */

.watermark {
    position: absolute;
    right: 2px;
    bottom: 0;
    display: flex;
    align-items: center;
    gap: 3px;
}

.watermark-text {
    display: flex;
    flex-direction: column;
    align-items: center;
}

.watermark strong {
    color: #c47a24;
    font-family: "Noto Sans CJK TC", sans-serif;
    font-size: 21px;
    font-weight: 700;
    line-height: 25px;
    text-shadow: 1px 0 #bbb, -1px 0 #bbb, 0 1px #bbb, 0 -1px #bbb;
}

.watermark small {
    color: #333;
    font-family: "Liberation Sans", sans-serif;
    font-size: 11px;
    font-weight: 700;
    line-height: 13px;
    text-shadow: 1px 0 #aaa, -1px 0 #aaa, 0 1px #aaa, 0 -1px #aaa;
}
```
